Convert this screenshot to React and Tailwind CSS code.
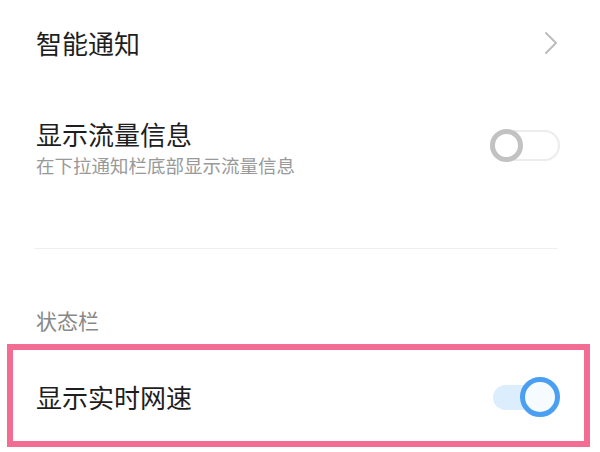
const font = { fontFamily: '"Noto Sans CJK SC", "Noto Sans", sans-serif' }

function ToggleOff() {
  return (
    <div className="relative w-[70px] h-[33px] shrink-0">
      <div className="absolute inset-y-[1px] left-0 right-0 rounded-full border-2 border-[#ececec] bg-white" />
      <div className="absolute left-0 top-0 w-[33px] h-[33px] rounded-full border-[5px] border-[#c2c2c2] bg-white" />
    </div>
  )
}

function ToggleOn() {
  return (
    <div className="relative w-[67px] h-[40px] shrink-0">
      <div className="absolute left-0 right-[6px] top-[8px] h-[25px] rounded-full bg-[#dcedfd]" />
      <div className="absolute right-0 top-0 w-[40px] h-[40px] rounded-full border-[5px] border-[#4a9ff3] bg-[#f6fbff]" />
    </div>
  )
}

export default function App() {
  return (
    <div className="w-[600px] h-[452px] bg-white overflow-hidden" style={font}>
      {/* 智能通知 */}
      <div className="h-[86px] flex items-center justify-between pl-[36px] pr-[42px]">
        <span className="text-[26px] leading-[30px] text-[#1e1e1e]">智能通知</span>
        <svg width="14" height="24" viewBox="0 0 14 24" fill="none">
          <path d="M2 2 L12 12 L2 22" stroke="#bdbdbd" strokeWidth="2" strokeLinecap="round" strokeLinejoin="round" />
        </svg>
      </div>

      {/* 显示流量信息 */}
      <div className="flex items-start justify-between pt-[33px] pl-[36px] pr-[40px]">
        <div className="flex flex-col gap-[5px]">
          <span className="text-[26px] leading-[30px] text-[#1e1e1e]">显示流量信息</span>
          <span className="text-[18.5px] leading-[22px] text-[#999]">在下拉通知栏底部显示流量信息</span>
        </div>
        <div className="mt-[10px]">
          <ToggleOff />
        </div>
      </div>

      <div className="mt-[72px] ml-[35px] mr-[42px] h-px bg-[#eeeeee]" />

      <div className="mt-[58px] pl-[36px] text-[21px] leading-[26px] text-[#888]">状态栏</div>

      {/* 显示实时网速 */}
      <div className="mt-[11px] ml-[7px] w-[583px] h-[103px] border-[6px] border-[#f26c93] flex items-center justify-between pt-[3px] pl-[23px] pr-[24px]">
        <span className="text-[26px] leading-[30px] text-[#1e1e1e]">显示实时网速</span>
        <ToggleOn />
      </div>
    </div>
  )
}
